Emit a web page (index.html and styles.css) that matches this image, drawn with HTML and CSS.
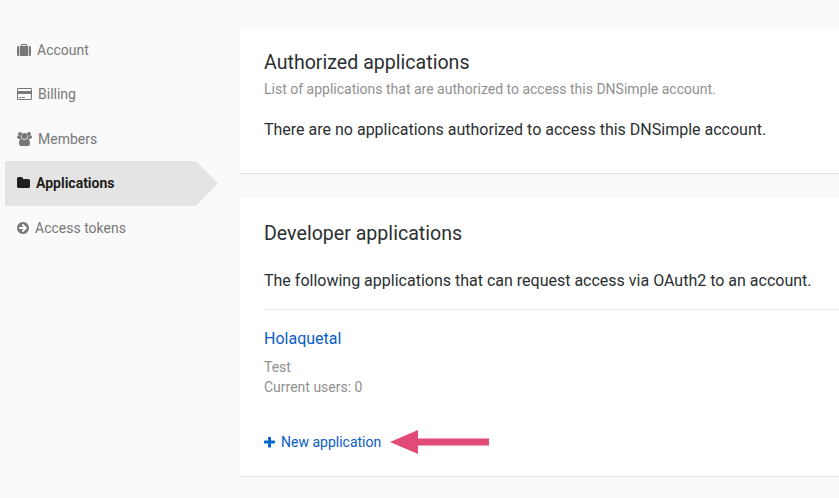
FILE: index.html
```html
<!DOCTYPE html>
<html lang="en">
<head>
<meta charset="utf-8">
<title>Applications</title>
<link rel="stylesheet" href="styles.css">
</head>
<body>
<div class="page">
  <nav class="sidebar">
    <a class="item"><svg class="icon" width="14" height="14" viewBox="0 0 14 14"><path d="M0 4.500Q0 3 1.500 3H2v10h-.5Q0 13 0 11.500zM2.700 3H4V1.800Q4 1 4.800 1h4.400Q10 1 10 1.800V3h1.300v10H2.700zM5 2v1h4V2zM12 3h.5Q14 3 14 4.500v7Q14 13 12.500 13H12z" fill-rule="evenodd"/></svg><span>Account</span></a>
    <a class="item"><svg class="icon" width="15" height="14" viewBox="0 0 15 14"><path fill-rule="evenodd" d="M1.250 1h12.500Q15 1 15 2.250v9.500Q15 13 13.750 13H1.250Q0 13 0 11.750v-9.500Q0 1 1.250 1zM1 2.250V4h13V2.250Q14 2 13.750 2H1.250Q1 2 1 2.250zM1 7v4.750q0 .25.25.25h12.500q.25 0 .25-.25V7zM2 10h2v1H2zM5 10h3v1H5z"/></svg><span>Billing</span></a>
    <a class="item"><svg class="icon" width="15" height="14" viewBox="0 0 15 14"><circle cx="3" cy="2" r="2"/><circle cx="12" cy="2" r="2"/><circle cx="7.500" cy="4" r="3"/><path d="M4.600 7H3.100Q0 7 0 5.600 0 3.500 1 3.500c.3 0 1 .7 2 .7q.5 0 1-.2 0 1.700 1 2.700zM10.400 7h1.500Q15 7 15 5.600q0-2.100-1-2.100c-.3 0-1 .7-2 .7q-.5 0-1-.2 0 1.700-1 2.700zM4.700 6.700q1.200 1.100 2.800 1.100t2.800-1.100Q13 6.700 13 11.700q0 2.300-2.200 2.300H4.200Q2 14 2 11.700q0-5 2.700-5z"/></svg><span>Members</span></a>
    <a class="item active"><svg class="icon" width="13" height="14" viewBox="64 0 1664 1792"><path d="M1728 608v704q0 92-66 158t-158 66h-1216q-92 0-158-66t-66-158v-960q0-92 66-158t158-66h320q92 0 158 66t66 158v32h672q92 0 158 66t66 158z"/></svg><span>Applications</span></a>
    <a class="item"><svg class="icon" width="12" height="14" viewBox="128 0 1536 1792"><path d="M1413 896q0-27-18-45l-91-91-362-362q-18-18-45-18t-45 18l-91 91q-18 18-18 45t18 45l189 189h-502q-26 0-45 19t-19 45v128q0 26 19 45t45 19h502l-189 189q-19 19-19 45t19 45l91 91q18 18 45 18t45-18l362-362 91-91q18-18 18-45zm251 0q0 209-103 385.500t-279.500 279.500-385.500 103-385.500-103-279.500-279.500-103-385.500 103-385.500 279.500-279.500 385.500-103 385.500 103 279.500 279.500 103 385.500z"/></svg><span>Access tokens</span></a>
  </nav>
  <main class="content">
    <section class="card authorized">
      <h2>Authorized applications</h2>
      <p class="subtitle">List of applications that are authorized to access this DNSimple account.</p>
      <p class="body">There are no applications authorized to access this DNSimple account.</p>
    </section>
    <section class="card developer">
      <h2>Developer applications</h2>
      <p class="body intro">The following applications that can request access via OAuth2 to an account.</p>
      <div class="app">
        <a class="app-name">Holaquetal</a>
        <p class="meta">Test</p>
        <p class="meta users">Current users: 0</p>
      </div>
      <div class="actions">
        <a class="new"><svg class="plus" width="11" height="11" viewBox="192 192 1408 1408"><path d="M1600 736v192q0 40-28 68t-68 28h-416v416q0 40-28 68t-68 28h-192q-40 0-68-28t-28-68v-416h-416q-40 0-68-28t-28-68v-192q0-40 28-68t68-28h416v-416q0-40 28-68t68-28h192q40 0 68 28t28 68v416h416q40 0 68 28t28 68z"/></svg><span>New application</span></a>
        <svg class="arrow" width="99" height="24" viewBox="0 0 99 24"><path d="M0 12L28 0v8.500h71v7H28V24z"/></svg>
      </div>
    </section>
  </main>
</div>
</body>
</html>
```

FILE: styles.css
```css
* { box-sizing: border-box; }
body {
  margin: 0;
  height: 498px;
  overflow: hidden;
  background: #fafafa;
  color: #2b2f31;
  font-family: Roboto, "Liberation Sans", sans-serif;
  font-size: 14px;
}
h2, p { margin: 0; font-weight: 400; white-space: nowrap; }
.page { display: flex; padding-top: 28px; }
.sidebar { width: 240px; margin-top: -0.500px; padding-left: 5px; flex: none; }
.item {
  display: flex;
  align-items: center;
  gap: 6px;
  width: 213px;
  height: 44.500px;
  padding-left: 12px;
  color: #787878;
}
.icon { display: block; fill: currentColor; flex: none; }
.item.active {
  height: 45px;
  padding-bottom: 1px;
  background: #e4e4e4;
  color: #231f20;
  clip-path: polygon(0 0, 191px 0, 100% 50%, 191px 100%, 0 100%);
}
.item.active span { font-weight: 700; }
.content { flex: 1; min-width: 0; }
.card {
  background: #fff;
  border-bottom: 1px solid #e1e1e1;
  padding-left: 24px;
}
.authorized { height: 146px; padding-top: 21px; }
.developer { height: 279px; margin-top: 24px; padding-top: 22px; }
h2 { font-size: 19.600px; line-height: 28px; }
.subtitle { line-height: 20px; margin-top: 2px; color: #909090; }
.body { font-size: 16px; line-height: 24px; }
.authorized .body { margin-top: 19px; }
.intro { margin-top: 21px; }
.app { border-top: 1px solid #eaeaea; margin-top: 16px; padding-top: 17px; }
.app-name { display: block; font-size: 16px; line-height: 24px; color: #0b5cc4; }
.meta { line-height: 20px; color: #909090; }
.app-name + .meta { margin-top: 6px; }
.actions { display: flex; align-items: center; height: 24px; margin-top: 33px; }
.new { display: flex; align-items: center; gap: 6px; color: #0b5cc4; width: 126px; white-space: nowrap; }
.plus { fill: #0b66cc; flex: none; }
.arrow { fill: #e24a78; flex: none; }
```
